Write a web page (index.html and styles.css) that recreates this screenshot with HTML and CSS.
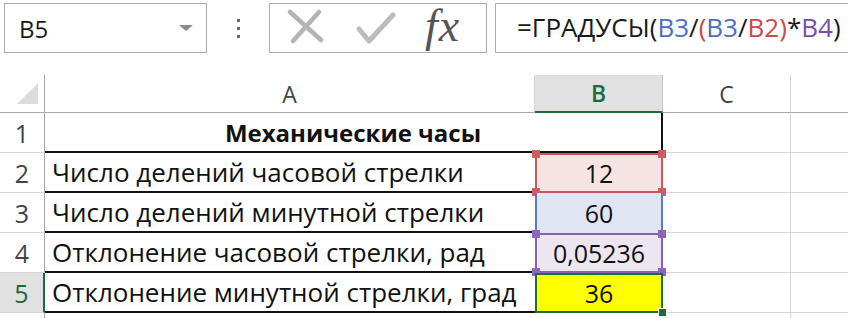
FILE: index.html
```html
<!DOCTYPE html>
<html lang="ru">

<head>
  <meta charset="UTF-8">
  <title>Механические часы</title>
  <link rel="stylesheet" href="styles.css">
</head>

<body>
  <div class="toolbar">
    <div class="namebox">
      <span>B5</span>
      <span class="arrow"></span>
    </div>
    <div class="grip">
      <i></i><i></i><i></i>
    </div>
    <div class="fxbox">
      <svg class="ico" width="40" height="40" viewBox="0 0 40 40">
        <path d="M5 4 L36 32 M34 4 L8 33" stroke="#b4b4b4" stroke-width="4.5" stroke-linecap="round" fill="none" />
      </svg>
      <svg class="ico" width="42" height="40" viewBox="0 0 42 40">
        <path d="M4 21 L14 33 L38 7" stroke="#bcbcbc" stroke-width="5" stroke-linecap="round" stroke-linejoin="round" fill="none" />
      </svg>
      <span class="fx">fx</span>
    </div>
    <div class="formula"><span>=ГРАДУСЫ(<span class="c-blue">B3</span>/<span class="c-red">(</span><span class="c-blue">B3</span>/<span class="c-red">B2)</span>*<span class="c-purple">B4</span>)</span></div>
  </div>

  <div class="sheet">
    <div class="corner"><span class="tri"></span></div>
    <div class="colhead">A</div>
    <div class="colhead active">B</div>
    <div class="colhead">C</div>
    <div class="colhead"></div>

    <div class="rownum">1</div>
    <div class="cell title">Механические часы</div>
    <div class="cell grid"></div>
    <div class="cell grid"></div>

    <div class="rownum">2</div>
    <div class="cell text">Число делений часовой стрелки</div>
    <div class="cell val r-red">12<i class="h tl"></i><i class="h tr"></i><i class="h bl"></i><i class="h br"></i></div>
    <div class="cell grid"></div>
    <div class="cell grid"></div>

    <div class="rownum">3</div>
    <div class="cell text">Число делений минутной стрелки</div>
    <div class="cell val r-blue">60</div>
    <div class="cell grid"></div>
    <div class="cell grid"></div>

    <div class="rownum">4</div>
    <div class="cell text">Отклонение часовой стрелки, рад</div>
    <div class="cell val r-purple">0,05236<i class="h tl"></i><i class="h tr"></i><i class="h bl"></i><i class="h br"></i></div>
    <div class="cell grid"></div>
    <div class="cell grid"></div>

    <div class="rownum active">5</div>
    <div class="cell text">Отклонение минутной стрелки, град</div>
    <div class="cell val selected">36<i class="fill"></i></div>
    <div class="cell grid"></div>
    <div class="cell grid"></div>

    <div class="rownum"></div>
    <div class="cell"></div>
    <div class="cell"></div>
    <div class="cell grid"></div>
    <div class="cell grid"></div>
  </div>
</body>

</html>
```

FILE: styles.css
```css
* {
  box-sizing: border-box;
}

body {
  margin: 0;
  width: 848px;
  height: 318px;
  overflow: hidden;
  background: #fff;
  font-family: "Open Sans", "Noto Sans", sans-serif;
  color: #1a1a1a;
}

/* formula bar */

.toolbar {
  display: flex;
  height: 50px;
  margin: 3px 0 22px 4px;
}

.namebox {
  display: flex;
  align-items: center;
  width: 203px;
  padding: 0 13px 0 14px;
  border: 1px solid #acacac;
  font-size: 24px;
}

.arrow {
  margin-left: auto;
  width: 0;
  height: 0;
  border-left: 7px solid transparent;
  border-right: 7px solid transparent;
  border-top: 6px solid #8a8a8a;
}

.grip {
  display: flex;
  flex-direction: column;
  align-items: center;
  justify-content: center;
  gap: 5px;
  width: 62px;
}

.grip i {
  width: 3px;
  height: 3px;
  background: #6a6a6a;
}

.fxbox {
  display: flex;
  align-items: center;
  width: 218px;
  padding-left: 15px;
  border: 1px solid #acacac;
}

.fxbox .ico {
  margin-right: 30px;
}

.fx {
  margin-left: -2px;
  font-family: "Liberation Serif", "DejaVu Serif", serif;
  font-style: italic;
  font-size: 46px;
  color: #555;
  letter-spacing: 1px;
  line-height: 1;
  margin-top: -4px;
}

.formula {
  flex: 1;
  margin-left: 8px;
  margin-right: -40px;
  padding-left: 21px;
  border: 1px solid #acacac;
  font-size: 26px;
  line-height: 47px;
  white-space: nowrap;
  overflow: hidden;
}

.c-blue {
  color: #4a6fc0;
}

.c-red {
  color: #c84a4a;
}

.c-purple {
  color: #7a4ea8;
}

/* sheet */

.sheet {
  display: grid;
  grid-template-columns: 45px 490px 128px 128px 80px;
  grid-template-rows: 38px repeat(5, 40px) 10px;
}

.corner {
  position: relative;
  border-right: 1px solid #a8a8a8;
  border-bottom: 1px solid #a8a8a8;
}

.tri {
  position: absolute;
  left: 17px;
  top: 8px;
  width: 0;
  height: 0;
  border-left: 21px solid transparent;
  border-bottom: 21px solid #dcdcdc;
}

.colhead {
  display: flex;
  align-items: center;
  justify-content: center;
  font-size: 23px;
  color: #444;
  border-right: 1px solid #d6d6d6;
  border-bottom: 1px solid #a8a8a8;
}

.colhead.active {
  background: #e1e1e1;
  color: #1e6b3a;
  font-weight: 600;
  border-right: 1px solid #c8c8c8;
  border-bottom: 2px solid #1e6b3a;
}

.rownum {
  display: flex;
  align-items: center;
  justify-content: center;
  font-size: 25px;
  color: #444;
  border-right: 1px solid #a8a8a8;
  border-bottom: 1px solid #d6d6d6;
}

.rownum.active {
  background: #e1e1e1;
  color: #1e6b3a;
  border-right: 2px solid #1e6b3a;
}

.cell {
  display: flex;
  align-items: center;
  font-size: 24px;
  color: #111;
}

.grid {
  border-right: 1px solid #d6d6d6;
  border-bottom: 1px solid #d6d6d6;
}

.title {
  grid-column: span 2;
  justify-content: center;
  font-weight: 700;
  border-right: 2px solid #111;
  border-bottom: 2px solid #111;
}

.text {
  padding-left: 7px;
  font-size: 26px;
  border-bottom: 2px solid #111;
}

.val {
  position: relative;
  justify-content: center;
  font-size: 25px;
}

.r-red {
  background: #f6e4e4;
  border: 2px solid #c9575a;
}

.r-blue {
  background: #e0e5f3;
  border-left: 2px solid #5a7cc8;
  border-right: 2px solid #5a7cc8;
}

.r-purple {
  background: #ece6f1;
  border: 2px solid #8662b0;
}

.selected {
  background: #ffff00;
  border: 2px solid #1e6b3a;
}

.h {
  position: absolute;
  width: 8px;
  height: 8px;
}

.r-red .h {
  background: #d05a5c;
}

.r-purple .h {
  background: #8b68b6;
}

.tl {
  left: -5px;
  top: -5px;
}

.tr {
  right: -5px;
  top: -5px;
}

.bl {
  left: -5px;
  bottom: -5px;
}

.br {
  right: -5px;
  bottom: -5px;
}

.fill {
  position: absolute;
  right: -6px;
  bottom: -6px;
  width: 9px;
  height: 9px;
  background: #1e6b3a;
  border: 1px solid #fff;
}
```
